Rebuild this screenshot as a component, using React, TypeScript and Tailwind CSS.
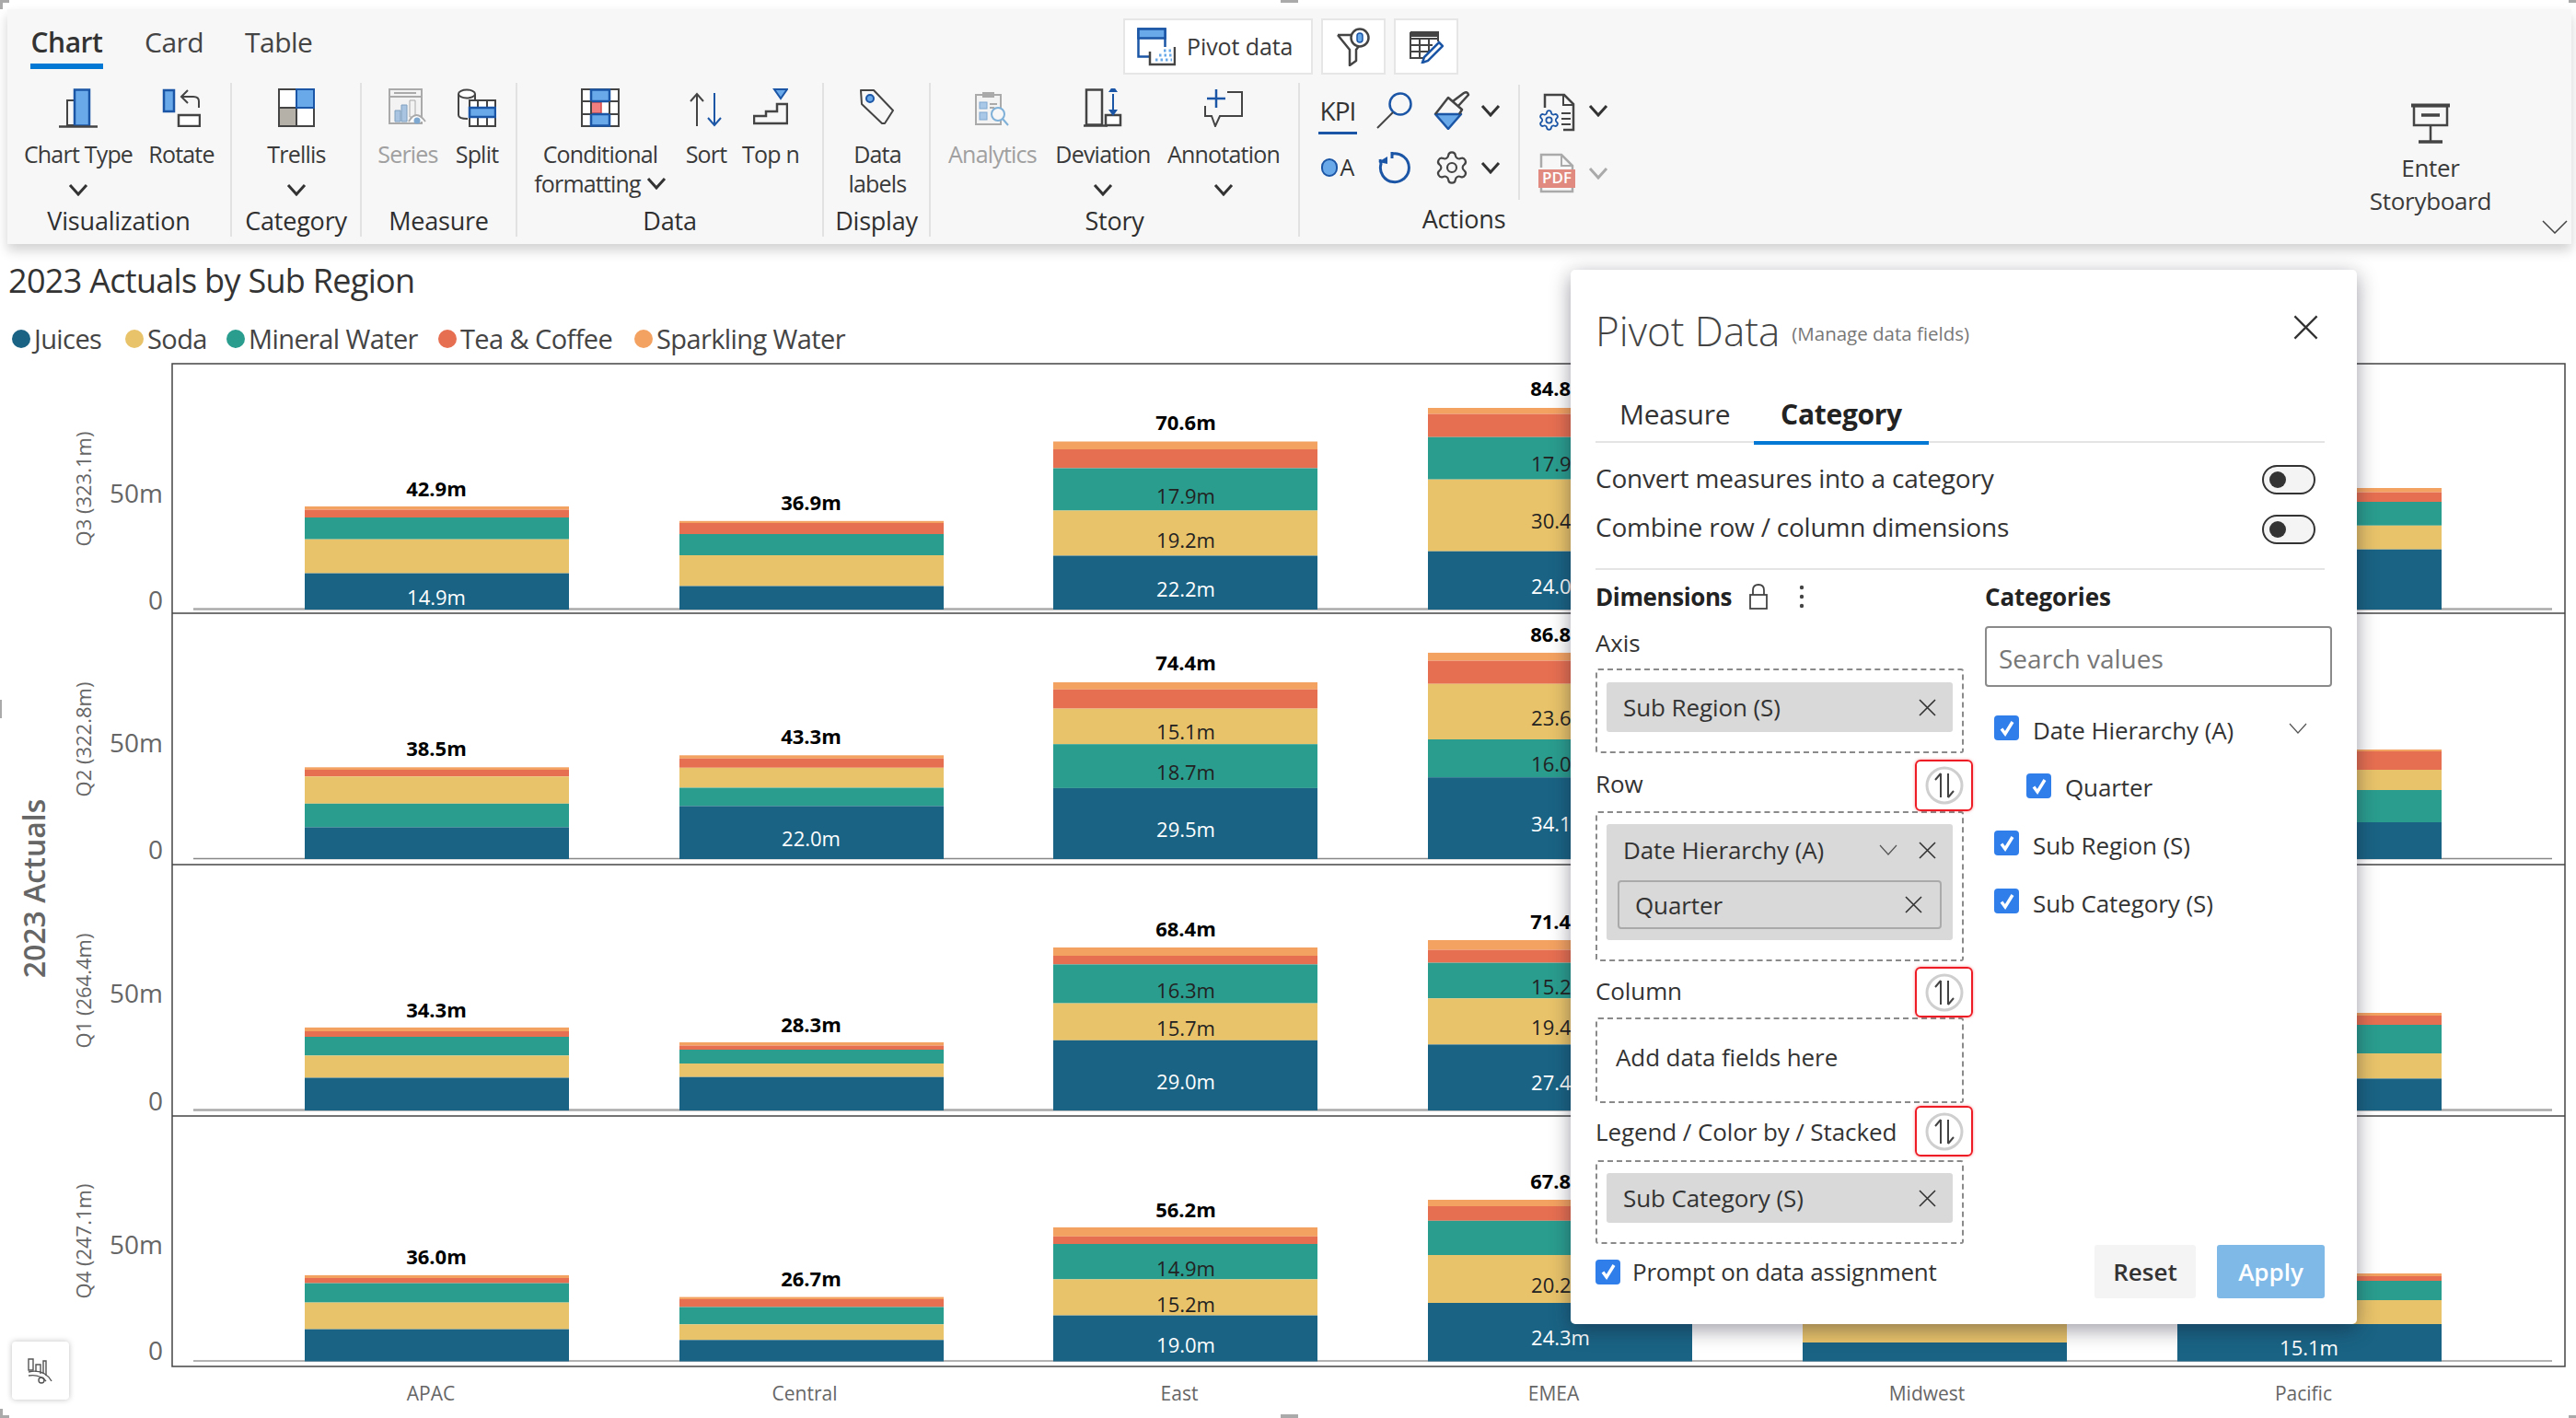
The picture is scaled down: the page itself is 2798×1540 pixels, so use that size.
import React from "react";
import { Settings } from "lucide-react";

const BLUE = "#1a6384", YEL = "#e8c36a", TEAL = "#2a9d8f", RED = "#e76f51", ORG = "#f4a261";
const FB = "#6aa9e9", DB = "#1b55a5", DK = "#444";

const colX = [331, 738, 1144, 1551, 1958, 2365];
const rowsData: { end: number; yFirst: boolean; base: string; bw: number; bars: (number[] | null)[] }[] = [
  { end: 661.5, yFirst: false, base: "#aaa", bw: 2.5, bars: [[550, 553.6, 562, 585.7, 622.6], [565.8, 568, 580, 603, 636.5], [479.5, 488, 508.5, 554.5, 603.5], [443, 449.6, 474.7, 520.7, 598.7], null, [530, 534.6, 545, 570.8, 596.7]] },
  { end: 932.5, yFirst: true, base: "#888", bw: 1.5, bars: [[833.3, 836, 843.3, 872.8, 898.4], [820.3, 823.8, 833.8, 855.5, 875.4], [741, 748.8, 769.6, 808.2, 855.9], [708.9, 717.6, 742.7, 803, 844.2], null, [814, 816, 836, 858, 893]] },
  { end: 1205.5, yFirst: false, base: "#aaa", bw: 2.5, bars: [[1115.9, 1120, 1126, 1146.4, 1170.5], [1132, 1135.5, 1140, 1155, 1169.7], [1029, 1038, 1047.4, 1089.6, 1129.8], [1021, 1031.6, 1045.6, 1084.3, 1134.4], null, [1100, 1103, 1113, 1144, 1171.4]] },
  { end: 1478, yFirst: false, base: "#999", bw: 1.5, bars: [[1384.9, 1388, 1393.6, 1414.6, 1443.6], [1408.6, 1411, 1419.5, 1438.3, 1455.3], [1333, 1342.8, 1351, 1389.4, 1428.6], [1303, 1310, 1325.8, 1363, 1415], [1340, 1350, 1365, 1400, 1458], [1383, 1386, 1391, 1412, 1438]] },
];
const totals: [string, number, number][] = [
  ["42.9m", 474, 530.6], ["36.9m", 881, 545.8], ["70.6m", 1288, 459], ["84.8m", 1695, 421.8],
  ["38.5m", 474, 813], ["43.3m", 881, 800], ["74.4m", 1288, 720], ["86.8m", 1695, 689],
  ["34.3m", 474, 1096.7], ["28.3m", 881, 1113], ["68.4m", 1288, 1009.4], ["71.4m", 1695, 1001],
  ["36.0m", 474, 1365], ["26.7m", 881, 1389], ["56.2m", 1288, 1313.8], ["67.8m", 1695, 1283],
];
const segs: [string, number, number, string][] = [
  ["14.9m", 474, 648.6, "#fff"], ["17.9m", 1288, 538.5, "#222"], ["19.2m", 1288, 586.6, "#222"], ["22.2m", 1288, 639.5, "#fff"],
  ["17.9m", 1695, 504, "#222"], ["30.4m", 1695, 566, "#222"], ["24.0m", 1695, 636.5, "#fff"],
  ["22.0m", 881, 911, "#fff"], ["15.1m", 1288, 795, "#222"], ["18.7m", 1288, 839.4, "#222"], ["29.5m", 1288, 901, "#fff"],
  ["23.6m", 1695, 780, "#222"], ["16.0m", 1695, 830, "#222"], ["34.1m", 1695, 895, "#fff"],
  ["16.3m", 1288, 1075.7, "#222"], ["15.7m", 1288, 1117.4, "#222"], ["29.0m", 1288, 1174.6, "#fff"],
  ["15.2m", 1695, 1072, "#222"], ["19.4m", 1695, 1116, "#222"], ["27.4m", 1695, 1176, "#fff"],
  ["14.9m", 1288, 1377.8, "#222"], ["15.2m", 1288, 1416.5, "#222"], ["19.0m", 1288, 1460.5, "#fff"],
  ["20.2m", 1695, 1396, "#222"], ["24.3m", 1695, 1453, "#fff"], ["15.1m", 2508, 1464, "#fff"],
];

function Chart() {
  return (
    <svg width={2798} height={1150} viewBox="0 390 2798 1150" className="block">
      <rect x={187} y={395} width={2599} height={1089} fill="none" stroke="#444" strokeWidth={1.5} />
      {[666, 939, 1212].map((y) => <line key={y} x1={187} x2={2786} y1={y} y2={y} stroke="#444" strokeWidth={1.5} />)}
      {rowsData.map((r, i) => (
        <g key={i}>
          <line x1={210} x2={2772} y1={r.end} y2={r.end} stroke={r.base} strokeWidth={r.bw} />
          {r.bars.map((b, j) => {
            if (!b) return null;
            const c = r.yFirst ? [ORG, RED, YEL, TEAL, BLUE] : [ORG, RED, TEAL, YEL, BLUE];
            return b.map((t, k) => (
              <rect key={j + "-" + k} x={colX[j]} width={287} y={t} height={(k < 4 ? b[k + 1] : r.end + 0.5) - t} fill={c[k]} />
            ));
          })}
        </g>
      ))}
      {totals.map(([t, x, y]) => (
        <text key={t + y} x={x} y={y - 1} textAnchor="middle" dominantBaseline="central" className="text-[22px] font-bold" fill="#000">{t}</text>
      ))}
      {segs.map(([t, x, y, c]) => (
        <text key={t + y} x={x} y={y - 1} textAnchor="middle" dominantBaseline="central" className="text-[22px]" fill={c}>{t}</text>
      ))}
      {[[536, 652], [807, 923], [1079, 1196], [1352, 1467]].map(([a, b]) => (
        <g key={a} className="text-[28px]" fill="#666">
          <text x={177} y={a - 1} textAnchor="end" dominantBaseline="central">50m</text>
          <text x={177} y={b - 1} textAnchor="end" dominantBaseline="central">0</text>
        </g>
      ))}
      {([["Q3 (323.1m)", 531], ["Q2 (322.8m)", 803], ["Q1 (264.4m)", 1076], ["Q4 (247.1m)", 1348]] as [string, number][]).map(([t, y]) => (
        <text key={t} x={90} y={y} transform={`rotate(-90 90 ${y})`} textAnchor="middle" dominantBaseline="central" className="text-[22px]" fill="#666">{t}</text>
      ))}
      <text x={36} y={965} transform="rotate(-90 36 965)" textAnchor="middle" dominantBaseline="central" className="text-[32px] font-semibold" fill="#666">2023 Actuals</text>
      {([["APAC", 468], ["Central", 874], ["East", 1281], ["EMEA", 1687.5], ["Midwest", 2093], ["Pacific", 2502]] as [string, number][]).map(([t, x]) => (
        <text key={t} x={x} y={1513} textAnchor="middle" dominantBaseline="central" className="text-[21px]" fill="#666">{t}</text>
      ))}
    </svg>
  );
}

/* ---------- Ribbon icons ---------- */
const Chev = ({ c = "#333", w = 22 }: { c?: string; w?: number }) => (
  <svg width={w} height={14} viewBox="0 0 22 14" fill="none" className="block"><path d="M2 2 L11 12 L20 2" stroke={c} strokeWidth={3} /></svg>
);
const IChart = () => (
  <svg width={42} height={44} viewBox="0 0 42 44" fill="none">
    <rect x={9} y={13} width={8} height={27} stroke={DK} strokeWidth={2} />
    <rect x={17} y={1.5} width={16} height={39} fill={FB} stroke={DB} strokeWidth={2.5} />
    <path d="M0 41.5H42" stroke={DK} strokeWidth={2.5} />
  </svg>
);
const IRotate = () => (
  <svg width={42} height={42} viewBox="0 0 42 42" fill="none">
    <rect x={2} y={2} width={11} height={23} fill={FB} stroke={DB} strokeWidth={2.5} />
    <rect x={18} y={29} width={23} height={12} stroke={DK} strokeWidth={2.5} fill="#fff" />
    <path d="M40 21 V14 Q40 9 34 9 H21 M28 2 L21 9 L28 16" stroke={DK} strokeWidth={2} />
  </svg>
);
const ITrellis = () => (
  <svg width={40} height={42} viewBox="0 0 40 42" fill="none">
    <rect x={1} y={1} width={38} height={40} fill="#fff" />
    <rect x={1} y={21} width={19} height={20} fill="#b5b1a9" />
    <rect x={20} y={1} width={19} height={20} fill={FB} />
    <path d="M1 1H39V41H1Z M20 1V41 M1 21H39" stroke={DK} strokeWidth={2} />
    <rect x={20} y={1} width={19} height={20} stroke={DB} strokeWidth={2} />
  </svg>
);
const ISeries = () => (
  <svg width={42} height={40} viewBox="0 0 42 40" fill="none">
    <rect x={1} y={1} width={35} height={37} fill="#f3f3f3" stroke="#aaa" strokeWidth={2} />
    <path d="M1 9H36 M6 5H30" stroke="#aaa" strokeWidth={2} />
    <path d="M7 24h6v12H7z M14 18h6v18h-6z" fill="#a9c4e0" stroke="#7f9fc0" />
    <path d="M23 13h6v18h-6z" fill="none" stroke="#aaa" />
    <path d="M22 36 Q30 22 40 36" fill="#fff" stroke="#aaa" strokeWidth={2} />
    <circle cx={31} cy={35} r={3.5} fill="#7fa8d0" />
  </svg>
);
const ISplit = () => (
  <svg width={42} height={42} viewBox="0 0 42 42" fill="none">
    <path d="M1 6V29 Q1 33 11 33" stroke={DK} strokeWidth={2} />
    <ellipse cx={10} cy={6} rx={9} ry={4.5} stroke={DK} strokeWidth={2} fill="#fff" />
    <path d="M19 6V13" stroke={DK} strokeWidth={2} />
    <rect x={13} y={13} width={28} height={28} fill="#fff" stroke={DK} strokeWidth={2} />
    <path d="M22 13V41 M32 13V41" stroke={DK} strokeWidth={2} />
    <rect x={13} y={21} width={28} height={10} fill={FB} stroke={DB} strokeWidth={2.5} />
  </svg>
);
const ICond = () => (
  <svg width={42} height={42} viewBox="0 0 42 42" fill="none">
    <rect x={1} y={1} width={40} height={40} fill="#fff" />
    <rect x={11} y={15} width={11} height={12} fill="#f27f7f" stroke="#d84848" strokeWidth={1.5} />
    <path d="M1 1H41V41H1Z M1 14H41 M1 28H41" stroke={DK} strokeWidth={2} />
    <rect x={11} y={1.5} width={20} height={12.5} fill={FB} stroke={DB} strokeWidth={2.5} />
    <rect x={11} y={28} width={20} height={12.5} fill={FB} stroke={DB} strokeWidth={2.5} />
    <path d="M11 14V28 M31 14V28" stroke={DK} strokeWidth={2} />
  </svg>
);
const ISort = () => (
  <svg width={36} height={38} viewBox="0 0 36 38" fill="none">
    <path d="M8 37V2 M1 10 L8 2 L15 10" stroke={DK} strokeWidth={2} />
    <path d="M27 1V36 M20 28 L27 36 L34 28" stroke={DB} strokeWidth={2} />
  </svg>
);
const ITopN = () => (
  <svg width={38} height={40} viewBox="0 0 38 40" fill="none">
    <path d="M23 1H37L30 11Z" fill={FB} stroke={DB} strokeWidth={2} />
    <path d="M1 38H37V17H26V25H14V30H1Z" stroke={DK} strokeWidth={2.5} />
  </svg>
);
const ITag = () => (
  <svg width={38} height={40} viewBox="0 0 38 40" fill="none">
    <path d="M1 2 H15 L36 24 L27 38 H24 L2 17 Z" stroke={DK} strokeWidth={2} strokeLinejoin="round" />
    <circle cx={11} cy={11} r={4} fill={FB} stroke={DB} strokeWidth={2} />
  </svg>
);
const IAnalytics = () => (
  <svg width={38} height={38} viewBox="0 0 38 38" fill="none">
    <rect x={1} y={4} width={27} height={32} fill="#f3f3f3" stroke="#aaa" strokeWidth={2} />
    <rect x={8} y={1} width={13} height={6} fill="#aaa" />
    <rect x={5} y={12} width={8} height={7} fill="#a9c8e8" stroke="#7fa8d0" />
    <rect x={5} y={23} width={8} height={8} fill="#a9c8e8" stroke="#7fa8d0" />
    <path d="M16 14H24 M16 18H21" stroke="#aaa" strokeWidth={2} />
    <circle cx={25} cy={25} r={7} fill="#f7f7f7" stroke="#7fb0d8" strokeWidth={2} />
    <path d="M30 30 L36 37" stroke="#7fb0d8" strokeWidth={2} />
  </svg>
);
const IDev = () => (
  <svg width={42} height={42} viewBox="0 0 42 42" fill="none">
    <rect x={3} y={1.5} width={17} height={38} stroke={DK} strokeWidth={2.5} />
    <path d="M0 40.5H26" stroke={DK} strokeWidth={2.5} />
    <rect x={24} y={29} width={16} height={11} fill="#fff" stroke={DK} strokeWidth={2.5} />
    <path d="M32 6V26" stroke={DB} strokeWidth={2} />
    <path d="M32 0L37 7H27Z M32 33L37 26H27Z" fill={DB} transform="translate(0 -3)" />
  </svg>
);
const IAnno = () => (
  <svg width={42} height={42} viewBox="0 0 42 42" fill="none">
    <path d="M25 4H41V30H17L12 41L8 30H1V19" stroke={DK} strokeWidth={2} />
    <path d="M13 1V21 M3 11H23" stroke={DB} strokeWidth={2.5} />
  </svg>
);
const IMag = () => (
  <svg width={40} height={40} viewBox="0 0 40 40" fill="none">
    <circle cx={26} cy={13} r={11.5} stroke={DB} strokeWidth={2.5} />
    <path d="M18 22L1 39" stroke={DK} strokeWidth={2} />
  </svg>
);
const IBrush = () => (
  <svg width={40} height={42} viewBox="0 0 40 42" fill="none">
    <path d="M2 25H30L16 41Z" fill={FB} stroke={DB} strokeWidth={2.5} strokeLinejoin="round" />
    <path d="M2 25L16 7L31 20L28 25 M21 11 L33 2 Q37 0 38 4 L27 16" stroke={DK} strokeWidth={2.5} strokeLinejoin="round" />
  </svg>
);
const IUndo = () => (
  <svg width={36} height={36} viewBox="0 0 36 36" fill="none">
    <path d="M15 3 A15.5 15.5 0 1 1 3 14 L2 9" stroke={DB} strokeWidth={3} />
    <path d="M0 12 L10 6 V14 Z" fill={DB} />
    <path d="M15 1 V8" stroke={DB} strokeWidth={3} />
  </svg>
);
const IDocGear = () => (
  <svg width={42} height={42} viewBox="0 0 42 42" fill="none">
    <path d="M8 16V2H29L39 12V40H28" stroke={DK} strokeWidth={2.5} />
    <path d="M28 2V13H39" stroke={DK} strokeWidth={2} />
    <path d="M26 22H36 M26 28H36 M26 34H36" stroke={DK} strokeWidth={2} />
    <Settings x={0} y={17} width={25} height={25} color={DB} strokeWidth={1.7} />
  </svg>
);
const IPdf = () => (
  <svg width={42} height={44} viewBox="0 0 42 44" fill="none">
    <path d="M4 16V2H26L38 14V20 M4 36V42H38V36" stroke="#aaa" strokeWidth={2.5} />
    <path d="M26 2V14H38" stroke="#aaa" strokeWidth={2} />
    <rect x={1} y={18} width={40} height={20} fill="#e08a80" />
    <text x={21} y={33} textAnchor="middle" fill="#fff" className="text-[17px] font-semibold">PDF</text>
  </svg>
);
const IPivot = () => (
  <svg width={42} height={42} viewBox="0 0 42 42" fill="none">
    <rect x={1.5} y={1.5} width={29} height={30} fill="#fff" stroke={DB} strokeWidth={2.5} />
    <rect x={1.5} y={1.5} width={29} height={10} fill={FB} stroke={DB} strokeWidth={2.5} />
    <path d="M14 21V40H41V21" fill="#fff" />
    <path d="M14 26V40H41V21" stroke={DK} strokeWidth={2.5} />
    <path d="M20 35H38 M24 30H38 M29 25H38" stroke={FB} strokeWidth={3} strokeDasharray="2.5 3" />
  </svg>
);
const IFilter = () => (
  <svg width={36} height={42} viewBox="0 0 36 42" fill="none">
    <path d="M1 8H24 M1 8L14 24V41L21 36V24L24 20" stroke={DK} strokeWidth={2.5} strokeLinejoin="round" />
    <circle cx={25} cy={11} r={9.5} fill="#fff" stroke={DK} strokeWidth={2.5} />
    <rect x={22} y={6} width={6} height={10} rx={3} fill={FB} stroke={DB} strokeWidth={1.5} />
  </svg>
);
const ITablePen = () => (
  <svg width={38} height={36} viewBox="0 0 38 36" fill="none">
    <path d="M2 2H32V12 M2 2V30H20 M2 2H32 M2 9H32 M2 16H26 M2 23H22 M12 9V30 M22 9V24" stroke={DK} strokeWidth={2} />
    <path d="M2 2H32V7H2Z" fill={DK} />
    <path d="M33 13L37 17L21 33L15 35L17 29Z" fill="#fff" stroke={DB} strokeWidth={2.5} />
  </svg>
);
const IBoard = () => (
  <svg width={44} height={44} viewBox="0 0 44 44" fill="none">
    <path d="M1 2.5H43" stroke={DK} strokeWidth={4} />
    <rect x={4} y={3} width={36} height={21} stroke={DK} strokeWidth={2.5} />
    <path d="M12 13H32" stroke={DK} strokeWidth={3.5} />
    <path d="M22 24V41" stroke={DK} strokeWidth={2.5} />
    <path d="M9 42H35" stroke={DK} strokeWidth={3.5} />
  </svg>
);

function Item({ w, ml, icon, top = 6, label, chev, gray }: { w: number; ml: number; icon: React.ReactNode; top?: number; label: React.ReactNode; chev?: boolean; gray?: boolean }) {
  return (
    <div className="flex flex-col items-center" style={{ width: w, marginLeft: ml }}>
      <div className="h-[62px] flex justify-center" style={{ paddingTop: top }}>{icon}</div>
      <div className={`text-[25px] leading-[32px] tracking-[-0.8px] -translate-y-[1px] text-center whitespace-nowrap ${gray ? "text-[#a0a0a0]" : "text-[#3a3a3a]"}`}>{label}</div>
      {chev && <div className="mt-[15px]"><Chev /></div>}
    </div>
  );
}
function Group({ w, name, border = true, children }: { w: number; name: string; border?: boolean; children: React.ReactNode }) {
  return (
    <div className={`h-[167px] flex flex-col justify-between shrink-0 ${border ? "border-r-2 border-[#e2e2e2]" : ""}`} style={{ width: w }}>
      <div className="flex">{children}</div>
      <div className="h-[34px] leading-[34px] text-center text-[27px] tracking-[-0.2px] text-[#2f2f2f]">{name}</div>
    </div>
  );
}

function Ribbon() {
  return (
    <div className="ml-[8px] mt-[10px] w-[2785px] h-[255px] bg-[#f7f7f7] shadow-[0_7px_12px_rgba(0,0,0,0.18)] relative">
      <div className="h-[80px] flex pl-[25px]">
        <div className="w-[79px] mt-[17px] flex flex-col items-center">
          <div className="h-[40px] leading-[37px] text-[30px] font-semibold text-[#333] tracking-[-0.5px] whitespace-nowrap">Chart</div>
          <div className="mt-[2px] h-[6px] w-full bg-[#0078d4]" />
        </div>
        <div className="w-[63px] ml-[45px] mt-[17px] h-[40px] leading-[37px] text-[30px] tracking-[-0.5px] text-[#444] whitespace-nowrap">Card</div>
        <div className="w-[71px] ml-[46px] mt-[17px] h-[40px] leading-[37px] text-[30px] tracking-[-0.5px] text-[#444] whitespace-nowrap">Table</div>
        <div className="ml-[883px] mt-[10px] flex gap-[9px] h-[61px]">
          <div className="w-[206px] bg-white border-2 border-[#e6e6e6] flex items-center pl-[13px] gap-[12px]">
            <IPivot />
            <span className="text-[25px] tracking-[-0.1px] text-[#3a3a3a]">Pivot data</span>
          </div>
          <div className="w-[70px] bg-white border-2 border-[#e6e6e6] flex items-center justify-center"><IFilter /></div>
          <div className="w-[70px] bg-white border-2 border-[#e6e6e6] flex items-center justify-center"><ITablePen /></div>
        </div>
      </div>
      <div className="flex">
        <Group w={244} name="Visualization">
          <Item w={116} ml={19} icon={<IChart />} label="Chart Type" chev />
          <Item w={76} ml={16} icon={<IRotate />} label="Rotate" />
        </Group>
        <Group w={141} name="Category">
          <Item w={80} ml={30} icon={<ITrellis />} label="Trellis" chev />
        </Group>
        <Group w={169} name="Measure">
          <Item w={70} ml={15} icon={<ISeries />} label="Series" gray />
          <Item w={60} ml={10} icon={<ISplit />} label="Split" />
        </Group>
        <Group w={333} name="Data">
          <Item w={150} ml={15} icon={<ICond />} label={<>Conditional<br /><span className="inline-flex items-center gap-[6px]">formatting<Chev /></span></>} />
          <Item w={56} ml={12} top={10} icon={<ISort />} label="Sort" />
          <Item w={64} ml={10} icon={<ITopN />} label="Top n" />
        </Group>
        <Group w={116} name="Display">
          <Item w={80} ml={18} icon={<ITag />} label={<>Data<br />labels</>} />
        </Group>
        <Group w={401} name="Story">
          <Item w={110} ml={12} top={9} icon={<IAnalytics />} label="Analytics" gray chev={false} />
          <Item w={110} ml={10} icon={<IDev />} label="Deviation" chev />
          <Item w={130} ml={11} icon={<IAnno />} label="Annotation" chev />
        </Group>
        <div className="w-[356px] h-[167px] flex flex-col justify-between shrink-0">
          <div className="flex">
            <div className="ml-[10px] grid grid-cols-[62px_62px_62px_22px] grid-rows-[60px_63px] items-center justify-items-center">
              <div className="w-[42px] h-[46px] mt-[6px] border-b-[3px] border-[#1b55a5] text-center text-[28px] leading-[40px] text-[#333] tracking-[-1px]">KPI</div>
              <IMag />
              <IBrush />
              <Chev />
              <div className="flex items-center gap-[3px]">
                <span className="w-[18px] h-[20px] rounded-full bg-[#6aa9e9] border-2 border-[#1b55a5]" />
                <span className="text-[25px] leading-none text-[#333]">A</span>
              </div>
              <IUndo />
              <Settings size={40} color="#444" strokeWidth={1.3} />
              <Chev />
            </div>
            <div className="ml-[19px] h-[125px] mt-[2px] border-l-2 border-[#e2e2e2] grid grid-cols-[60px_30px] grid-rows-[56px_80px] items-center justify-items-center pl-[10px]">
              <div className="mt-[4px]"><IDocGear /></div>
              <div className="-mt-[1px]"><Chev /></div>
              <div><IPdf /></div>
              <div><Chev c="#aaa" /></div>
            </div>
          </div>
          <div className="h-[34px] leading-[34px] text-center text-[27px] tracking-[-0.2px] text-[#2f2f2f] -translate-y-[2px]">Actions</div>
        </div>
        <div className="ml-auto mr-[63px] w-[180px] flex flex-col items-center pt-[22px]">
          <IBoard />
          <div className="mt-[8px] text-[26px] leading-[36px] tracking-[-0.3px] text-center text-[#3a3a3a]">Enter<br />Storyboard</div>
        </div>
      </div>
      <svg width={28} height={15} viewBox="0 0 28 15" fill="none" className="absolute right-[4px] bottom-[11px]"><path d="M1 1L14 14L27 1" stroke="#444" strokeWidth={1.5} /></svg>
    </div>
  );
}

const legend = [
  { c: "bg-[#1a6384]", t: "Juices", w: "w-[123px]" },
  { c: "bg-[#e8c36a]", t: "Soda", w: "w-[110px]" },
  { c: "bg-[#2a9d8f]", t: "Mineral Water", w: "w-[230px]" },
  { c: "bg-[#e76f51]", t: "Tea & Coffee", w: "w-[213px]" },
  { c: "bg-[#f4a261]", t: "Sparkling Water", w: "w-[240px]" },
];

/* ---------- Modal ---------- */
const Check = ({ cls = "" }: { cls?: string }) => (
  <span className={`w-[27px] h-[27px] rounded-[4px] bg-[#2f7eea] flex items-center justify-center shrink-0 ${cls}`}>
    <svg width={20} height={20} viewBox="0 0 20 20" fill="none"><path d="M4 10.5L8 16L16 3" stroke="#fff" strokeWidth={3.4} /></svg>
  </span>
);
const Swap = () => (
  <div className="w-[63px] h-full border-2 border-[#ee1c25] rounded-[6px] flex items-center justify-center shrink-0 shadow-[0_0_3px_rgba(238,28,37,0.5)]">
    <svg width={42} height={42} viewBox="0 0 42 42" fill="none">
      <circle cx={21} cy={21} r={19} stroke="#cfcfcf" strokeWidth={3} />
      <path d="M17 34V8 M11 15L17 8" stroke="#444" strokeWidth={2} />
      <path d="M25 8V34 M31 27L25 34" stroke="#444" strokeWidth={2} />
    </svg>
  </div>
);
const XS = ({ s = 19 }: { s?: number }) => (
  <svg width={s} height={s} viewBox="0 0 19 19" fill="none" className="shrink-0"><path d="M1 1L18 18M18 1L1 18" stroke="#333" strokeWidth={1.6} /></svg>
);
const SmallChev = () => (
  <svg width={20} height={12} viewBox="0 0 20 12" fill="none" className="shrink-0"><path d="M1 1L10 11L19 1" stroke="#555" strokeWidth={1.2} /></svg>
);
const Dash = "border-2 border-dashed border-[#8a8a8a] rounded-[3px]";
const Txt = "text-[26px] leading-[36px] text-[#333] whitespace-nowrap tracking-[-0.1px]";

function Toggle({ dy }: { dy: string }) {
  return (
    <span className={`w-[58px] h-[32px] rounded-full border-2 border-[#333] bg-[#f4f4f4] flex items-center pl-[6px] shrink-0 ${dy}`}>
      <span className="w-[18px] h-[18px] rounded-full bg-[#333]" />
    </span>
  );
}
function Chip({ t }: { t: string }) {
  return (
    <div className="mx-[10px] h-[54px] rounded-[3px] bg-[#d9d9d9] flex items-center justify-between pl-[18px] pr-[18px]">
      <span className={Txt}>{t}</span>
      <XS />
    </div>
  );
}

function Modal() {
  return (
    <div className="absolute left-[1706px] top-[293px] w-[854px] h-[1145px] bg-white rounded-[5px] shadow-[0_6px_22px_rgba(20,20,40,0.42)] pl-[27px]">
      <div className="pt-[39px] h-[95px] flex items-center pr-[42px]">
        <span className="text-[44px] leading-[56px] font-light text-[#444] whitespace-nowrap -translate-y-[1px]">Pivot Data</span>
        <span className="ml-[13px] mt-[4px] text-[20.5px] text-[#777] whitespace-nowrap">(Manage data fields)</span>
        <span className="ml-auto -mt-[10px]"><XS s={27} /></span>
      </div>
      <div className="mt-[43px] w-[792px] h-[50px] border-b-2 border-[#e4e4e4] flex">
        <div className="w-[172px] pl-[26px] text-[30px] leading-[38px] tracking-[-0.3px] text-[#333] whitespace-nowrap">Measure</div>
        <div className="w-[190px] h-[52px] border-b-4 border-[#0078d4] text-center text-[30px] leading-[38px] font-bold tracking-[-0.3px] text-[#222] whitespace-nowrap">Category</div>
      </div>
      <div className="mt-[18px] w-[792px] pr-[10px] h-[40px] flex items-center justify-between">
        <span className="text-[28px] text-[#333] tracking-[-0.2px]">Convert measures into a category</span><Toggle dy="translate-y-[2px]" />
      </div>
      <div className="mt-[13px] w-[792px] pr-[10px] h-[40px] flex items-center justify-between">
        <span className="text-[28px] text-[#333] tracking-[-0.2px]">Combine row / column dimensions</span><Toggle dy="translate-y-[3px]" />
      </div>
      <div className="mt-[25px] w-[792px] h-[2px] bg-[#e4e4e4]" />
      <div className="flex">
        <div className="w-[400px] shrink-0 pb-[15px]">
          <div className="mt-[11px] h-[36px] flex items-center">
            <span className="text-[26px] font-bold text-[#222] tracking-[-0.4px] whitespace-nowrap">Dimensions</span>
            <svg width={24} height={28} viewBox="0 0 24 28" fill="none" className="ml-[17px]"><rect x={3} y={12} width={18} height={15} stroke="#444" strokeWidth={1.8} /><path d="M6 12V7Q6 1 12 1Q18 1 18 7V12" stroke="#444" strokeWidth={1.8} /></svg>
            <svg width={6} height={26} viewBox="0 0 6 26" className="ml-[32px]"><circle cx={3} cy={3} r={2.2} fill="#444" /><circle cx={3} cy={13} r={2.2} fill="#444" /><circle cx={3} cy={23} r={2.2} fill="#444" /></svg>
          </div>
          <div className={`mt-[14px] ${Txt}`}>Axis</div>
          <div className={`mt-[10px] h-[92px] pt-[13px] ${Dash}`}><Chip t="Sub Region (S)" /></div>
          <div className="mt-[7px] h-[56px] flex items-center justify-between -mr-[10px]"><span className={`${Txt} -translate-y-[2px]`}>Row</span><Swap /></div>
          <div className={`h-[163px] pt-[12px] ${Dash}`}>
            <div className="mx-[10px] h-[126px] rounded-[3px] bg-[#d9d9d9] flex flex-col">
              <div className="h-[61px] flex items-center pl-[18px] pr-[18px] pb-[5px]">
                <span className={Txt}>Date Hierarchy (A)</span>
                <span className="ml-auto mr-[23px]"><SmallChev /></span>
                <XS />
              </div>
              <div className="mx-[12px] h-[53px] border-2 border-[#aaa] rounded-[4px] flex items-center justify-between pl-[17px] pr-[19px]">
                <span className={Txt}>Quarter</span><XS />
              </div>
            </div>
          </div>
          <div className="mt-[6px] h-[55px] flex items-center justify-between -mr-[10px]"><span className={`${Txt} -translate-y-[2px]`}>Column</span><Swap /></div>
          <div className={`h-[93px] flex items-center pl-[20px] pb-[8px] ${Dash}`}><span className={Txt}>Add data fields here</span></div>
          <div className="mt-[3px] h-[55px] flex items-center justify-between -mr-[10px]"><span className={Txt}>Legend / Color by / Stacked</span><Swap /></div>
          <div className={`mt-[4px] h-[91px] pt-[12px] ${Dash}`}><Chip t="Sub Category (S)" /></div>
          <div className="mt-[16px] h-[28px] flex items-center gap-[13px]"><Check /><span className={`${Txt} tracking-[-0.25px]`}>Prompt on data assignment</span></div>
        </div>
        <div className="ml-[23px] w-[377px] shrink-0 flex flex-col">
          <div className="mt-[11px] h-[36px] flex items-center text-[26px] font-bold text-[#222] tracking-[-0.1px]">Categories</div>
          <div className="mt-[14px] h-[66px] border-2 border-[#8a8a8a] rounded-[4px] flex items-center pl-[13px] pt-[3px] text-[28px] text-[#777]">Search values</div>
          <div className="mt-[31px] h-[27px] ml-[10px] flex items-center gap-[15px] pr-[27px]"><Check /><span className={`${Txt} translate-y-[2px]`}>Date Hierarchy (A)</span><span className="ml-auto"><SmallChev /></span></div>
          <div className="mt-[36px] h-[27px] ml-[45px] flex items-center gap-[15px]"><Check /><span className={`${Txt} translate-y-[1px]`}>Quarter</span></div>
          <div className="mt-[35px] h-[27px] ml-[10px] flex items-center gap-[15px]"><Check /><span className={`${Txt} translate-y-[2px]`}>Sub Region (S)</span></div>
          <div className="mt-[36px] h-[27px] ml-[10px] flex items-center gap-[15px]"><Check /><span className={`${Txt} translate-y-[2px]`}>Sub Category (S)</span></div>
          <div className="mt-auto flex justify-end gap-[23px] pr-[8px]">
            <div className="w-[110px] h-[58px] rounded-[3px] bg-[#f4f4f4] flex items-center justify-center text-[26px] font-semibold text-[#333]">Reset</div>
            <div className="w-[117px] h-[58px] rounded-[3px] bg-[#7eb9e8] flex items-center justify-center text-[26px] font-semibold text-white">Apply</div>
          </div>
        </div>
      </div>
    </div>
  );
}

export default function App() {
  return (
    <div className="relative w-[2798px] h-[1540px] overflow-hidden bg-white font-['Open_Sans','Noto_Sans',sans-serif] text-[#333]">
      <Ribbon />
      <div className="mt-[18px] pl-[9px] h-[44px] text-[36px] leading-[44px] tracking-[-0.7px] text-[#333] whitespace-nowrap">2023 Actuals by Sub Region</div>
      <div className="mt-[21px] h-[40px] pl-[13px] flex items-center text-[29px] tracking-[-0.6px] text-[#444] whitespace-nowrap">
        {legend.map((l) => (
          <div key={l.t} className={`flex items-center gap-[4px] ${l.w}`}>
            <span className={`w-[20px] h-[20px] rounded-full ${l.c}`} />
            <span>{l.t}</span>
          </div>
        ))}
      </div>
      <div className="mt-[2px]"><Chart /></div>
      <Modal />
      <div className="absolute left-[13px] top-[1457px] w-[62px] h-[63px] bg-white rounded-[4px] shadow-[0_0_6px_rgba(0,0,0,0.25)] flex items-center justify-center">
        <svg width={28} height={30} viewBox="0 0 28 30" fill="none">
          <path d="M1 2V14H6V2Z M9 16V8H14V18 M17 18V4H20V20" stroke="#555" strokeWidth={1.4} />
          <path d="M1 20Q13 18 20 26 M1 16Q18 12 26 26" stroke="#555" strokeWidth={1.4} />
          <circle cx={15} cy={25} r={3} stroke="#555" strokeWidth={1.4} />
        </svg>
      </div>
      <span className="absolute left-0 top-0 w-[10px] h-[3px] bg-[#aaa]" />
      <span className="absolute left-0 top-0 w-[3px] h-[10px] bg-[#aaa]" />
      <span className="absolute left-[1391px] top-0 w-[19px] h-[3px] bg-[#aaa]" />
      <span className="absolute right-0 top-0 w-[8px] h-[3px] bg-[#aaa]" />
      <span className="absolute left-0 top-[760px] w-[2px] h-[20px] bg-[#aaa]" />
      <span className="absolute left-[1391px] bottom-0 w-[19px] h-[4px] bg-[#aaa]" />
      <span className="absolute left-0 bottom-0 w-[3px] h-[10px] bg-[#aaa]" />
      <span className="absolute left-0 bottom-0 w-[10px] h-[3px] bg-[#aaa]" />
      <span className="absolute right-0 bottom-0 w-[8px] h-[3px] bg-[#aaa]" />
    </div>
  );
}
